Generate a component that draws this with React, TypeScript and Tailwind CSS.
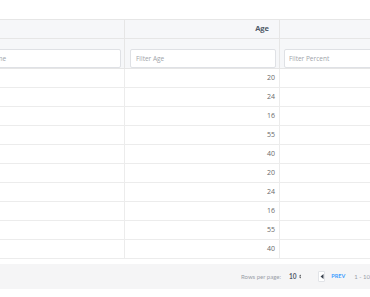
import React from "react";

const ages = [20, 24, 16, 55, 40, 20, 24, 16, 55, 40];

export default function App() {
  return (
    <div
      className="w-[370px] h-[297px] overflow-hidden bg-white pt-[19px]"
      style={{ fontFamily: '"Open Sans", "Liberation Sans", sans-serif' }}
    >
      <div className="ml-[-40px] w-[620px]">
        {/* header */}
        <div className="flex h-[20px] border-y border-[#e6e6e6] bg-[#f6f7f9]">
          <div className="w-[165px] border-r border-[#e6e6e6]" />
          <div className="w-[155px] border-r border-[#e6e6e6] flex items-center justify-end pr-[10px] text-[7.5px] font-bold text-[#505a68]">
            Age
          </div>
          <div className="flex-1" />
        </div>
        {/* filter row */}
        <div className="flex h-[30px] border-b border-[#e6e6e6] bg-[#f6f7f9]">
          <div className="w-[165px] border-r border-[#e6e6e6] pl-[5px] pr-[3px] pt-[4px]">
            <input
              className="w-full h-[19px] rounded-[2px] border border-[#dfe1e5] bg-white pl-[5px] text-[6.5px] text-[#606266] placeholder:text-[#a0a4aa] outline-none"
              placeholder="Filter Name"
            />
          </div>
          <div className="w-[155px] border-r border-[#e6e6e6] pl-[5px] pr-[3px] pt-[4px]">
            <input
              className="w-full h-[19px] rounded-[2px] border border-[#dfe1e5] bg-white pl-[5px] text-[6.5px] text-[#606266] placeholder:text-[#a0a4aa] outline-none"
              placeholder="Filter Age"
            />
          </div>
          <div className="w-[150px] pl-[4px] pt-[4px]">
            <input
              className="w-full h-[19px] rounded-[2px] border border-[#dfe1e5] bg-white pl-[4px] text-[6.5px] text-[#606266] placeholder:text-[#a0a4aa] outline-none"
              placeholder="Filter Percent"
            />
          </div>
        </div>
        {/* rows */}
        {ages.map((a, i) => (
          <div key={i} className="flex h-[19px] border-b border-[#ececec]">
            <div className="w-[165px] border-r border-[#ececec]" />
            <div className="w-[155px] border-r border-[#ececec] flex items-center justify-end pr-[4px] text-[7px] text-[#6a6a6a]">
              {a}
            </div>
            <div className="flex-1" />
          </div>
        ))}
      </div>
      {/* footer */}
      <div
        className="mt-[5px] h-[25px] bg-[#f5f5f6] flex items-center pl-[241px] whitespace-nowrap"
        style={{ fontFamily: 'Lato, "Liberation Sans", sans-serif' }}
      >
        <span className="text-[6px] text-[#9aa0a8]">Rows per page:</span>
        <span className="ml-[8px] text-[6.5px] font-bold text-[#505a68]">10</span>
        <svg className="ml-[2px]" width="4" height="7" viewBox="0 0 4 7">
          <path d="M0 3 L2 0.5 L4 3 Z" fill="#606266" />
          <path d="M0 4 L2 6.5 L4 4 Z" fill="#606266" />
        </svg>
        <div className="ml-[17px] w-[10px] h-[11px] bg-white border border-[#e2e4e8] rounded-[1px] flex items-center justify-center">
          <svg width="4" height="5" viewBox="0 0 4 5">
            <path d="M3.5 0 L0.5 2.5 L3.5 5 Z" fill="#3d4450" />
          </svg>
        </div>
        <span className="ml-[6px] text-[5.5px] font-bold text-[#409eff]">PREV</span>
        <span className="ml-[9px] text-[6px] text-[#9aa0a8]">1 - 10</span>
      </div>
    </div>
  );
}
